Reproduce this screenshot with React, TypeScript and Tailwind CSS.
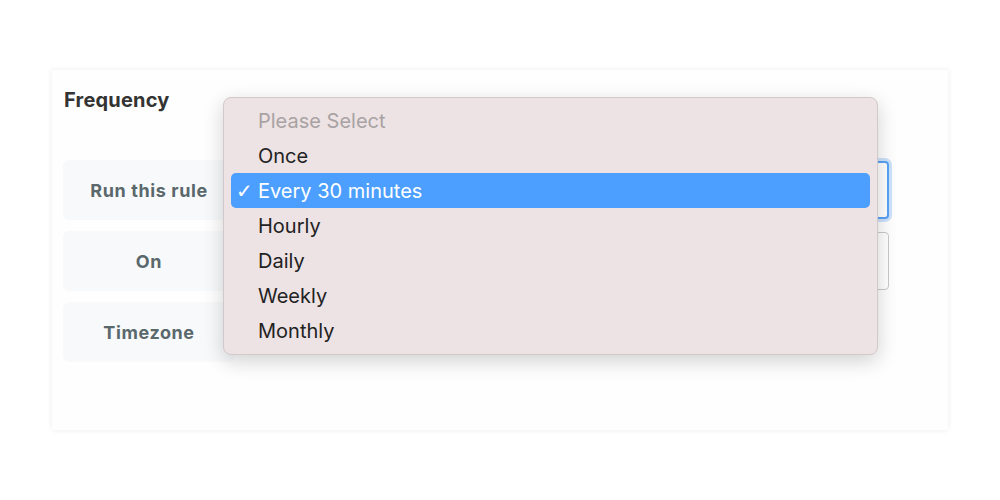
import React from "react";

const options = ["Once", "Every 30 minutes", "Hourly", "Daily", "Weekly", "Monthly"];

function LabelRow({ label, input }: { label: string; input?: "focused" | "normal" }) {
  return (
    <div className="flex items-center gap-[10px] h-[60px]">
      <div className="w-[172px] h-[60px] rounded-[6px] bg-[#f8f9fa] flex items-center justify-center text-[18px] font-bold tracking-[0.6px] text-[#5a686c]">
        {label}
      </div>
      {input === "focused" && (
        <div className="flex-1 h-[58px] rounded-[4px] border-2 border-[#5aa2f5] bg-white ring-[3px] ring-[#5aa2f5]/30" />
      )}
      {input === "normal" && (
        <div className="flex-1 h-[58px] rounded-[4px] border border-[#c9c9c9] bg-white" />
      )}
    </div>
  );
}

export default function App() {
  return (
    <div className="w-[1000px] h-[500px] bg-white pt-[70px] pl-[52px]" style={{ fontFamily: "Inter, 'Liberation Sans', sans-serif" }}>
      <div className="relative w-[896px] h-[360px] bg-[#fefefe] shadow-[0_0_6px_rgba(0,0,0,0.08)] pt-[18px] pl-[11px] pr-[59px]">
        <div className="pl-[1px] text-[20px] font-bold tracking-[0.2px] text-[#333] leading-[24px]">Frequency</div>
        <div className="mt-[48px] flex flex-col gap-[11px]">
          <LabelRow label="Run this rule" input="focused" />
          <LabelRow label="On" input="normal" />
          <LabelRow label="Timezone" />
        </div>

        <div className="absolute left-[171px] top-[27px] w-[655px] h-[258px] rounded-[8px] bg-[#ede2e4] border border-[#d2c9cb] shadow-[0_6px_20px_rgba(0,0,0,0.18)] pt-[5px] px-[7px] text-[20px] text-[#222]">
          <div className="h-[35px] flex items-center pl-[27px] text-[#a8a2a3]">Please Select</div>
          {options.map((o) => {
            const sel = o === "Every 30 minutes";
            return (
              <div
                key={o}
                className={
                  sel
                    ? "h-[35px] flex items-center rounded-[5px] bg-[#4c9ffe] text-white relative pl-[27px]"
                    : "h-[35px] flex items-center pl-[27px]"
                }
              >
                {sel && <span className="absolute left-[5px] text-[20px] font-light" style={{ fontFamily: "'DejaVu Sans', sans-serif" }}>✓</span>}
                {o}
              </div>
            );
          })}
        </div>
      </div>
    </div>
  );
}
